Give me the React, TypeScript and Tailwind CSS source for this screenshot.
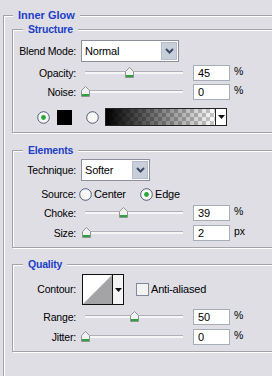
const BG = "bg-[#dfdee5]";

function Group({ title, titleLeft, titleSize, className, children }: { title: string; titleLeft: string; titleSize: string; className?: string; children: React.ReactNode }) {
  return (
    <div className={`relative border border-[#a3a2a9] shadow-[inset_1px_1px_0_#fff,1px_1px_0_#fff] ${className ?? ""}`}>
      <span className={`absolute -top-[7px] ${titleLeft} ${titleSize} ${BG} px-[5px] font-bold leading-[13px] text-[#1d3ec7]`}>{title}</span>
      {children}
    </div>
  );
}

function Label({ children }: { children: React.ReactNode }) {
  return <div className="w-[63px] shrink-0 text-right">{children}</div>;
}

function Chevron() {
  return (
    <svg width="9" height="6" viewBox="0 0 9 6">
      <path d="M1 1 L4.5 4.5 L8 1" fill="none" stroke="#3d4a66" strokeWidth="2" />
    </svg>
  );
}

function Select({ value, width }: { value: string; width: string }) {
  return (
    <div className={`ml-[5px] flex h-[22px] ${width} border border-[#8c909c] bg-white`}>
      <div className="flex flex-1 items-center pl-[3px] text-[11px]">{value}</div>
      <div className="m-[1px] flex w-[16px] items-center justify-center border border-[#b5bccb] bg-[#c9cedb]">
        <Chevron />
      </div>
    </div>
  );
}

function Thumb() {
  return (
    <svg width="9" height="11" viewBox="0 0 9 11">
      <path d="M0.5 4.5 L4.5 0.5 L8.5 4.5 L8.5 10.5 L0.5 10.5 Z" fill="#f1f1f1" stroke="#8d9590" />
      <path d="M1 8 L8 8 L8 10 L1 10 Z" fill="#2ea040" />
    </svg>
  );
}

function Slider({ label, value, max, unit, display }: { label: string; value: number; max: number; unit: string; display: string }) {
  const x = 5 + (value / max) * 98 - 4;
  return (
    <div className="flex h-[16px] items-center">
      <Label>{label}</Label>
      <div className="relative ml-[4px] h-[16px] w-[110px]">
        <div className="absolute left-[5px] top-[6px] h-[3px] w-[98px] border-t border-[#b0b0b8] bg-[#f6f6f6]" />
        <div className="absolute top-[2px]" style={{ left: x }}>
          <Thumb />
        </div>
      </div>
      <div className="ml-[3px] flex h-[16px] w-[37px] items-center border border-[#a7adb6] bg-white pl-[4px] text-[11px]">{display}</div>
      <div className="ml-[4px] -mt-[3px]">{unit}</div>
    </div>
  );
}

function Radio({ on }: { on?: boolean }) {
  return (
    <svg width="13" height="13" viewBox="0 0 13 13" className="shrink-0">
      <circle cx="6.5" cy="6.5" r="5.8" fill="#f7f7f5" stroke="#4f5d78" />
      {on && <circle cx="6.5" cy="6.5" r="2.4" fill="#2ca63a" />}
    </svg>
  );
}

function DropTri() {
  return (
    <svg width="7" height="4" viewBox="0 0 7 4">
      <path d="M0 0 L7 0 L3.5 4 Z" fill="#111" />
    </svg>
  );
}

export default function App() {
  return (
    <div className={`h-[376px] w-[272px] overflow-hidden ${BG} pl-[3px] pt-[15px] text-[10.5px] leading-[13px] tracking-[-0.2px] text-black`} style={{ fontFamily: '"Liberation Sans", Arial, sans-serif' }}>
      <Group title="Inner Glow" titleLeft="left-[9px]" titleSize="text-[11px] tracking-[0px]" className="h-[400px] w-[320px]">
        <div className="ml-[8px] mt-[13px] flex flex-col">
          <Group title="Structure" titleLeft="left-[10px]" titleSize="text-[10.5px]" className="px-0 pb-[6px] pt-[10px]">
            <div className="flex h-[22px] items-center">
              <Label>Blend Mode:</Label>
              <Select value="Normal" width="w-[98px]" />
            </div>
            <div className="mt-[3px]">
              <Slider label="Opacity:" value={45} max={100} unit="%" display="45" />
            </div>
            <div className="mt-[3px]">
              <Slider label="Noise:" value={0} max={100} unit="%" display="0" />
            </div>
            <div className="mt-[8px] flex h-[18px] items-center">
              <div className="ml-[24px]">
                <Radio on />
              </div>
              <div className="ml-[7px] h-[15px] w-[15px] bg-black" />
              <div className="ml-[14px]">
                <Radio />
              </div>
              <div className="ml-[6px] flex h-[18px] w-[122px] border border-[#222]">
                <div className="relative flex-1 bg-[conic-gradient(#c8c8c8_25%,#fff_0_50%,#c8c8c8_0_75%,#fff_0)] bg-[length:8px_8px]">
                  <div className="absolute inset-0 bg-gradient-to-r from-black to-transparent" />
                </div>
                <div className="flex w-[11px] items-center justify-center border-l border-[#222] bg-white">
                  <DropTri />
                </div>
              </div>
            </div>
          </Group>

          <Group title="Elements" titleLeft="left-[10px]" titleSize="text-[10.5px]" className="mt-[17px] pb-[6px] pt-[8px]">
            <div className="flex h-[22px] items-center">
              <Label>Technique:</Label>
              <Select value="Softer" width="w-[69px]" />
            </div>
            <div className="mt-[6px] flex h-[14px] items-center">
              <Label>Source:</Label>
              <div className="ml-[3px] flex w-[61px] items-center">
                <Radio />
                <span className="ml-[2px] text-[11px]">Center</span>
              </div>
              <Radio on />
              <span className="ml-[2px] text-[11px]">Edge</span>
            </div>
            <div className="mt-[4px]">
              <Slider label="Choke:" value={39} max={100} unit="%" display="39" />
            </div>
            <div className="mt-[4px]">
              <Slider label="Size:" value={2} max={250} unit="px" display="2" />
            </div>
          </Group>

          <Group title="Quality" titleLeft="left-[10px]" titleSize="text-[10.5px]" className="mt-[16px] pb-[6px] pt-[9px]">
            <div className="flex h-[31px] items-center">
              <Label>Contour:</Label>
              <div className="ml-[6px] flex h-[31px] w-[42px] border border-[#111] bg-white">
                <svg width="29" height="29" viewBox="0 0 29 29">
                  <path d="M0 29 L29 0 L29 29 Z" fill="#a4a4a6" />
                </svg>
                <div className="flex flex-1 items-center justify-center border-l border-[#111] bg-[#f4f4f4]">
                  <DropTri />
                </div>
              </div>
              <div className="ml-[12px] h-[13px] w-[13px] border border-[#7d8ba0] bg-[#f3f3f1]" />
              <span className="ml-[2px] text-[11px]">Anti-aliased</span>
            </div>
            <div className="mt-[4px]">
              <Slider label="Range:" value={50} max={100} unit="%" display="50" />
            </div>
            <div className="mt-[4px]">
              <Slider label="Jitter:" value={0} max={100} unit="%" display="0" />
            </div>
          </Group>
        </div>
      </Group>
    </div>
  );
}
